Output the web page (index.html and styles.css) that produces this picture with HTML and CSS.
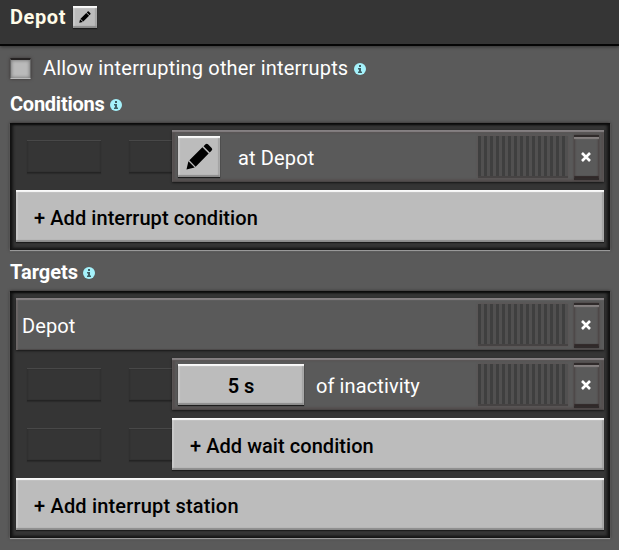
FILE: index.html
```html
<!DOCTYPE html>
<html lang="en">
<head>
<meta charset="utf-8">
<title>Depot</title>
<link rel="stylesheet" href="styles.css">
</head>
<body>
<svg class="defs" aria-hidden="true">
  <symbol id="pencil" viewBox="0 0 28 28">
    <path d="M.5 27.500l2-8.500 6.500 6.500zM3.500 18L17 4.500l6.500 6.500L10 24.500zM18.200 3.400l2-2q1.300-1.300 2.600 0l3.800 3.800q1.300 1.300 0 2.600l-2 2z"/>
  </symbol>
  <symbol id="info" viewBox="0 0 12 12">
    <circle cx="6" cy="6" r="6" fill="#a5f2fb"/>
    <path d="M5 2h2v2H5zM4 5h3v3.500h1V10H4V8.500h1v-2H4z" fill="#3f5f65"/>
  </symbol>
  <symbol id="cross" viewBox="0 0 10 10">
    <path d="M1 1l8 8M9 1l-8 8" stroke="#fff" stroke-width="2.600"/>
  </symbol>
</svg>
<header class="titlebar">
  <h1 class="title">Depot</h1>
  <button class="light rename" aria-label="Rename"><svg><use href="#pencil"/></svg></button>
</header>
<main class="content">
  <div class="allow">
    <span class="checkbox"></span>
    <span class="allow-text">Allow interrupting other interrupts</span>
    <svg class="info"><use href="#info"/></svg>
  </div>
  <div class="heading"><h2 class="h-conditions">Conditions</h2><svg class="info"><use href="#info"/></svg></div>
  <section class="panel">
    <div class="indented">
      <div class="slots"><i></i><i></i></div>
      <div class="row">
        <button class="light edit" aria-label="Edit"><svg><use href="#pencil"/></svg></button>
        <span class="label at">at Depot</span>
        <span class="handle"></span>
        <button class="close" aria-label="Remove"><svg><use href="#cross"/></svg></button>
      </div>
    </div>
    <button class="light add"><span class="t-condition">+ Add interrupt condition</span></button>
  </section>
  <div class="heading second"><h2 class="h-targets">Targets</h2><svg class="info"><use href="#info"/></svg></div>
  <section class="panel">
    <div class="row station">
      <span class="label depot">Depot</span>
      <span class="handle"></span>
      <button class="close" aria-label="Remove"><svg><use href="#cross"/></svg></button>
    </div>
    <div class="indented">
      <div class="slots"><i></i><i></i></div>
      <div class="row">
        <button class="light time">5 s</button>
        <span class="label inactivity">of inactivity</span>
        <span class="handle"></span>
        <button class="close" aria-label="Remove"><svg><use href="#cross"/></svg></button>
      </div>
    </div>
    <div class="indented">
      <div class="slots"><i></i><i></i></div>
      <button class="light add"><span class="t-wait">+ Add wait condition</span></button>
    </div>
    <button class="light add"><span class="t-station">+ Add interrupt station</span></button>
  </section>
</main>
</body>
</html>
```
FILE: styles.css
```css
* { box-sizing: border-box; }
body {
  margin: 0;
  height: 550px;
  overflow: hidden;
  background: #5a5a5a;
  color: #fff;
  font: 20px/28px Roboto, "Liberation Sans", sans-serif;
}
h1, h2 { margin: 0; font-size: 20px; line-height: 28px; font-weight: 700; }
button { margin: 0; padding: 0; border: 0; font: inherit; color: #000; }
svg { display: block; fill: #000; }
.defs { width: 0; height: 0; position: absolute; }

.titlebar {
  display: flex;
  align-items: flex-start;
  height: 46px;
  padding: 3px 0 0 10px;
  background: #353535;
  border-bottom: 2px solid #050505;
  box-shadow: 0 1px 3px #333;
}
.title { width: 63px; color: #fffbe8; letter-spacing: 0.6px; }
.light {
  background: #bcbcbc;
  box-shadow: inset 0 2px 1px #fafafa, inset 0 -2px 1px #8c8c8c,
    inset 2px 0 1px #c9c9c9, inset -2px 0 1px #a2a2a2, 0 1px 1px #1c1c1c;
}
.rename { display: grid; place-items: center; width: 24px; height: 22px; margin-top: 3px; }
.rename svg { width: 12px; height: 12px; }

.content { padding: 8px 9px 0 10px; }
.allow { display: flex; align-items: center; height: 28px; }
.checkbox {
  width: 21px;
  height: 21px;
  margin-right: 12px;
  background: #bababa;
  border: solid;
  border-width: 2px 1px 1px;
  border-color: #252222 #666 #bbb;
  box-shadow: inset 0 0 3px 1px #858585, 0 0 3px #3b3535;
}
.allow-text { width: 311px; white-space: nowrap; letter-spacing: 0.19px; }
.allow .info { margin-top: 2px; }
.info { width: 12px; height: 12px; }
.heading { display: flex; align-items: center; height: 28px; margin: 8px 0 5px; }
.heading .info { margin: 1px 0 0; }
.heading h2 { white-space: nowrap; }
.h-conditions { width: 100px; letter-spacing: -0.25px; }
.h-targets { width: 73px; }
.second { margin: 8px 0 5px; }

.panel {
  display: flex;
  flex-direction: column;
  gap: 8px;
  padding: 7px 6px 8px;
  background: #353535;
  box-shadow: inset 0 2px 2px #0b0b0b, inset 3px 0 3px #161616,
    inset -3px 0 3px #161616, inset 0 -2px 3px #171717,
    0 1px 1px #999, 0 0 3px #2d2929;
}
.indented { display: grid; grid-template-columns: 156px 1fr; height: 52px; }
.slots { display: flex; gap: 28px; padding: 10px 0 0 11px; overflow: hidden; }
.slots i {
  flex: 0 0 74px;
  height: 33px;
  border-top: 1px solid #484848;
  border-bottom: 1px solid #242424;
  box-shadow: inset 1px 0 1px #303030, inset -1px 0 1px #303030, 0 1px 1px #2b2b2b;
}
.row {
  display: flex;
  align-items: center;
  height: 52px;
  padding: 0 5px 0 6px;
  background: #5a5a5a;
  box-shadow: inset 0 2px 1px #858082, inset 0 -1px 1px #4a4545,
    inset 0 0 2px 3px #565050, 0 1px 2px #171717;
}
.station { box-shadow: inset 0 2px 1px #858082, inset 2px 0 1px #6a6464, inset 0 -1px 1px #4a4545, 0 1px 2px #171717; }
.label { flex: 1; white-space: nowrap; padding-top: 4px; }
.at { padding-left: 18px; letter-spacing: 0.15px; }
.depot { letter-spacing: 0.1px; }
.inactivity { padding-left: 12px; letter-spacing: 0.1px; }
.edit { display: grid; place-items: center; width: 42px; height: 41px; }
.edit svg { width: 27px; height: 27px; margin-top: 1px; }
.time { width: 126px; height: 41px; font-weight: 600; padding-top: 4px; }
.handle {
  width: 90px;
  height: 42px;
  margin: 1px 6px 0 0;
  background: repeating-linear-gradient(90deg, #3f3f3f 0 3px, #515050 3px 6px);
  border-bottom: 2px solid #464343;
  box-shadow: 0 0 2px #5b5050;
}
.close {
  display: grid;
  place-items: center;
  width: 25px;
  height: 45px;
  margin-top: 2px;
  padding-right: 1px;
  background: #5a5a5a;
  border: solid;
  border-width: 2px 0;
  border-color: #302b2b #8a8686;
  box-shadow: inset 0 2px 1px #858080, inset 0 -2px 1px #302828,
    inset 1px 0 2px #4a4040, inset -1px 0 2px #4a4040, 0 0 2px #453a3a;
}
.close svg { width: 10px; height: 10px; }
.add {
  display: flex;
  align-items: center;
  height: 52px;
  padding: 4px 0 0 18px;
  font-weight: 500;
  white-space: nowrap;
  text-align: left;
}
.t-condition { letter-spacing: 0.07px; }
.t-station { letter-spacing: 0.18px; }
.t-wait { letter-spacing: 0.05px; }
```
